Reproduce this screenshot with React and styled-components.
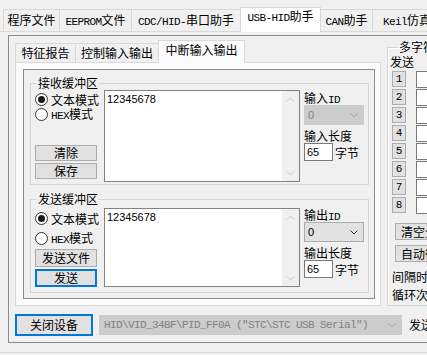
import React from "react";
import styled, { createGlobalStyle, css } from "styled-components";

const Global = createGlobalStyle`
  html, body { margin: 0; padding: 0; background: #f0f0f0; overflow: hidden; }
  body { font-family: "Noto Sans CJK SC", "Noto Sans", sans-serif; font-size: 12px; color: #000; }
  * { box-sizing: border-box; }
`;

const Window = styled.div`
  width: 427px;
  height: 355px;
  overflow: hidden;
  background: #f0f0f0;
`;

const Lat = styled.span`
  font-family: "Liberation Mono", monospace;
  font-size: 11px;
  letter-spacing: -0.6px;
`;

const MixedWrap = styled.span`
  white-space: nowrap;
  line-height: 14px;
`;

function Mixed({ text }) {
  return (
    <MixedWrap>
      {text
        .split(/([\x20-\x7e]+)/)
        .filter(Boolean)
        .map((s, i) => (/^[\x20-\x7e]+$/.test(s) ? <Lat key={i}>{s}</Lat> : <React.Fragment key={i}>{s}</React.Fragment>))}
    </MixedWrap>
  );
}

/* ---------- main tabs ---------- */
const TabBar = styled.div`
  display: flex;
  align-items: flex-start;
  height: 32px;
  padding-left: 3px;
  border-bottom: 1px solid #d9d9d9;
`;

const MainTab = styled.div`
  flex: none;
  width: ${(p) => p.$w}px;
  height: 22px;
  margin-top: 9px;
  margin-right: -1px;
  padding-top: 3px;
  border: 1px solid #d9d9d9;
  border-bottom: none;
  background: #f0f0f0;
  text-align: center;
  line-height: 14px;
  white-space: nowrap;
  ${(p) =>
    p.$active &&
    css`
      position: relative;
      z-index: 1;
      margin-top: 7px;
      height: 25px;
      padding-top: 1px;
      background: #fff;
    `}
`;

const MainPage = styled.div`
  height: 321px;
  padding: 3px 0 0 8px;
  border-bottom: 1px solid #d9d9d9;
`;

const Frame = styled.div`
  display: flex;
  flex-direction: column;
  width: 440px;
  height: 308px;
  padding-left: 6px;
  border: 1px solid #8a8a8a;
  border-right: none;
`;

const TopRow = styled.div`
  display: flex;
  gap: 6px;
  margin-top: 4px;
  height: 266px;
`;

/* ---------- sub tabs ---------- */
const SubTabs = styled.div`
  flex: none;
  display: flex;
  flex-direction: column;
  width: 366px;
`;

const SubTabBar = styled.div`
  display: flex;
  align-items: flex-start;
  height: 23px;
  border-bottom: 1px solid #d9d9d9;
`;

const SubTab = styled.div`
  flex: none;
  width: ${(p) => p.$w}px;
  height: 19px;
  margin-top: 3px;
  margin-right: -1px;
  padding-top: 2px;
  border: 1px solid #d9d9d9;
  border-bottom: none;
  background: #f0f0f0;
  text-align: center;
  line-height: 14px;
  white-space: nowrap;
  ${(p) =>
    p.$active &&
    css`
      position: relative;
      z-index: 1;
      margin-top: 0;
      height: 23px;
      background: #fbfbfb;
    `}
`;

const SubPage = styled.div`
  flex: 1;
  display: flex;
  padding: 6px 5px 6px 7px;
  border: 1px solid #d9d9d9;
  border-top: none;
  background: #fbfbfb;
`;

const DarkFrame = styled.div`
  flex: 1;
  display: flex;
  flex-direction: column;
  padding: 6px 5px 5px 6px;
  border: 1px solid #8a8a8a;
  background: #f0f0f0;
`;

/* ---------- groups ---------- */
const Group = styled.fieldset`
  margin: ${(p) => p.$mt || 0}px 0 0 0;
  min-width: 0;
  padding: ${(p) => p.$pad};
  border: 1px solid #d5d5d5;
`;

const Legend = styled.legend`
  margin-left: ${(p) => p.$ml || 2}px;
  padding: 0 1px;
  line-height: 14px;
  white-space: nowrap;
`;

const GroupBody = styled.div`
  display: flex;
  align-items: flex-start;
`;

const LeftCol = styled.div`
  display: flex;
  flex-direction: column;
  width: 62px;
  height: ${(p) => p.$h}px;
  margin-right: 7px;
  padding-top: ${(p) => p.$top}px;
  padding-bottom: ${(p) => p.$bottom}px;
`;

const RadioRow = styled.label`
  display: flex;
  align-items: center;
  gap: 3px;
  height: 15px;
  margin-top: ${(p) => p.$mt || 0}px;
  line-height: 14px;
  white-space: nowrap;
`;

const BtnStack = styled.div`
  display: flex;
  flex-direction: column;
  gap: 2px;
  margin-top: auto;
`;

const Btn = styled.button`
  flex: none;
  display: flex;
  align-items: center;
  justify-content: center;
  width: ${(p) => p.$w}px;
  height: ${(p) => p.$h}px;
  margin: ${(p) => p.$m || "0"};
  padding: 0;
  border: 1px solid #adadad;
  background: #e1e1e1;
  color: #000;
  font: inherit;
  line-height: 14px;
  white-space: nowrap;
  ${(p) =>
    p.$focus &&
    css`
      border: 2px solid #0078d7;
    `}
`;

const Memo = styled.div`
  flex: none;
  display: flex;
  width: 196px;
  height: ${(p) => p.$h}px;
  border: 1px solid #828282;
  background: #fff;
`;

const MemoText = styled.div`
  flex: 1;
  padding: 1px 2px;
  font-family: "Liberation Sans", Arial, sans-serif;
  font-size: 11px;
  line-height: 14px;
`;

const ScrollBar = styled.div`
  width: 17px;
  display: flex;
  flex-direction: column;
  justify-content: space-between;
  background: #f0f0f0;
`;

const RightCol = styled.div`
  display: flex;
  flex-direction: column;
  width: 64px;
  margin-left: 4px;
  padding-top: ${(p) => p.$top}px;
`;

const FieldLabel = styled.div`
  height: 14px;
  margin-top: ${(p) => p.$mt || 0}px;
  line-height: 14px;
  white-space: nowrap;
`;

const Combo = styled.div`
  flex: none;
  display: flex;
  align-items: center;
  justify-content: space-between;
  width: ${(p) => p.$w}px;
  height: 20px;
  margin-left: ${(p) => p.$ml || 0}px;
  padding: 0 5px 0 ${(p) => p.$pl || 3}px;
  border: 1px solid ${(p) => (p.$disabled ? "#cccccc" : "#adadad")};
  background: ${(p) => (p.$disabled ? "#cccccc" : "#e1e1e1")};
  color: ${(p) => (p.$disabled ? "#838383" : "#000")};
  font-family: "Liberation Sans", Arial, sans-serif;
  font-size: 11px;
  white-space: nowrap;
  overflow: hidden;
`;

const ComboText = styled.span`
  font-family: "Liberation Mono", monospace;
  letter-spacing: -0.6px;
`;

const LenRow = styled.div`
  display: flex;
  align-items: center;
  gap: 2px;
  white-space: nowrap;
`;

const NumBox = styled.div`
  width: 29px;
  height: 18px;
  padding-left: 2px;
  border: 1px solid #7a7a7a;
  background: #fff;
  font-family: "Liberation Sans", Arial, sans-serif;
  font-size: 11px;
  line-height: 16px;
`;

/* ---------- right group ---------- */
const SideGroup = styled.fieldset`
  flex: 1;
  min-width: 0;
  margin: 0;
  padding: 1px 0 0 2px;
  border: 1px solid #d5d5d5;
  box-shadow: inset 1px 1px 0 #fff;
`;

const SideText = styled.div`
  height: 14px;
  margin: ${(p) => p.$m || "0"};
  line-height: 14px;
  white-space: nowrap;
`;

const MultiRow = styled.div`
  display: flex;
  align-items: center;
  height: 16px;
  margin-top: 2px;
`;

const NumBtn = styled.button`
  flex: none;
  width: 14px;
  height: 16px;
  margin-left: 2px;
  padding: 0;
  border: 1px solid #adadad;
  background: #e1e1e1;
  color: #000;
  font-family: "Liberation Mono", monospace;
  font-size: 11px;
  line-height: 14px;
`;

const RowInput = styled.div`
  flex: none;
  width: 60px;
  height: 17px;
  margin-left: 10px;
  border: 1px solid #7a7a7a;
  background: #fff;
`;

/* ---------- bottom ---------- */
const BottomRow = styled.div`
  display: flex;
  align-items: center;
  height: 22px;
  margin-top: 8px;
  white-space: nowrap;
`;

const Chevron = ({ color = "#333" }) => (
  <svg width="8" height="5" viewBox="0 0 8 5">
    <polyline points="0.5,0.5 4,4 7.5,0.5" fill="none" stroke={color} strokeWidth="1" />
  </svg>
);

const ScrollArrow = ({ up }) => (
  <svg width="17" height="17" viewBox="0 0 17 17">
    <polyline
      points={up ? "5,10.5 8.5,7 12,10.5" : "5,7.5 8.5,11 12,7.5"}
      fill="none"
      stroke="#c2c2c2"
      strokeWidth="1"
    />
  </svg>
);

const Radio = ({ on }) => (
  <svg width="13" height="13" viewBox="0 0 13 13" style={{ flex: "none" }}>
    <circle cx="6.5" cy="6.5" r="6" fill="#fff" stroke="#333" strokeWidth="1" />
    {on && <circle cx="6.5" cy="6.5" r="3.5" fill="#1a1a1a" />}
  </svg>
);

function BufferGroup({ title, send }) {
  const memoH = send ? 79 : 92;
  return (
    <Group $mt={send ? 7 : 0} $pad={send ? "2px 0 4px 4px" : "0 0 2px 4px"}>
      <Legend>{title}</Legend>
      <GroupBody>
        <LeftCol $h={send ? 80 : 92} $top={send ? 3 : 2} $bottom={send ? 1 : 3}>
          <RadioRow>
            <Radio on />
            <span>文本模式</span>
          </RadioRow>
          <RadioRow $mt={send ? 5 : 0}>
            <Radio />
            <Mixed text="HEX模式" />
          </RadioRow>
          <BtnStack>
            {send ? (
              <>
                <Btn $w={62} $h={18}>发送文件</Btn>
                <Btn $w={62} $h={18} $focus>发送</Btn>
              </>
            ) : (
              <>
                <Btn $w={62} $h={16}>清除</Btn>
                <Btn $w={62} $h={16}>保存</Btn>
              </>
            )}
          </BtnStack>
        </LeftCol>
        <Memo $h={memoH}>
          <MemoText>12345678</MemoText>
          <ScrollBar>
            <ScrollArrow up />
            <ScrollArrow />
          </ScrollBar>
        </Memo>
        <RightCol $top={send ? 0 : 1}>
          <FieldLabel>
            <Mixed text={send ? "输出ID" : "输入ID"} />
          </FieldLabel>
          <Combo $w={60} $disabled={!send}>
            <span>0</span>
            <Chevron color={send ? "#333" : "#a6a6a6"} />
          </Combo>
          <FieldLabel $mt={4}>{send ? "输出长度" : "输入长度"}</FieldLabel>
          <LenRow>
            <NumBox>65</NumBox>
            <span>字节</span>
          </LenRow>
        </RightCol>
      </GroupBody>
    </Group>
  );
}

const mainTabs = [
  { t: "程序文件", w: 57 },
  { t: "EEPROM文件", w: 73 },
  { t: "CDC/HID-串口助手", w: 110 },
  { t: "USB-HID助手", w: 81, active: true },
  { t: "CAN助手", w: 53 },
  { t: "Keil仿真", w: 70 },
];

const subTabs = [
  { t: "特征报告", w: 61 },
  { t: "控制输入输出", w: 84 },
  { t: "中断输入输出", w: 87, active: true },
];

export default function App() {
  return (
    <Window>
      <Global />
      <TabBar>
        {mainTabs.map((tb) => (
          <MainTab key={tb.t} $w={tb.w} $active={tb.active}>
            <Mixed text={tb.t} />
          </MainTab>
        ))}
      </TabBar>
      <MainPage>
        <Frame>
          <TopRow>
            <SubTabs>
              <SubTabBar>
                {subTabs.map((tb) => (
                  <SubTab key={tb.t} $w={tb.w} $active={tb.active}>
                    {tb.t}
                  </SubTab>
                ))}
              </SubTabBar>
              <SubPage>
                <DarkFrame>
                  <BufferGroup title="接收缓冲区" />
                  <BufferGroup title="发送缓冲区" send />
                </DarkFrame>
              </SubPage>
            </SubTabs>
            <SideGroup>
              <Legend $ml={8}>多字符发送</Legend>
              <SideText>发送</SideText>
              {[1, 2, 3, 4, 5, 6, 7, 8].map((n) => (
                <MultiRow key={n}>
                  <NumBtn>{n}</NumBtn>
                  <RowInput />
                </MultiRow>
              ))}
              <Btn $w={84} $h={17} $m="10px 0 0 5px">清空全部数据</Btn>
              <Btn $w={84} $h={17} $m="5px 0 0 5px">自动循环发送</Btn>
              <SideText $m="8px 0 0 2px">间隔时间(ms)</SideText>
              <SideText $m="4px 0 0 2px">循环次数</SideText>
            </SideGroup>
          </TopRow>
          <BottomRow>
            <Btn $w={78} $h={22} $focus>关闭设备</Btn>
            <Combo $w={303} $disabled $ml={6} $pl={4}>
              <ComboText>{'HID\\VID_34BF\\PID_FF0A ("STC\\STC USB Serial")'}</ComboText>
              <Chevron color="#a6a6a6" />
            </Combo>
            <SideText $m="0 0 0 7px">发送</SideText>
          </BottomRow>
        </Frame>
      </MainPage>
    </Window>
  );
}
